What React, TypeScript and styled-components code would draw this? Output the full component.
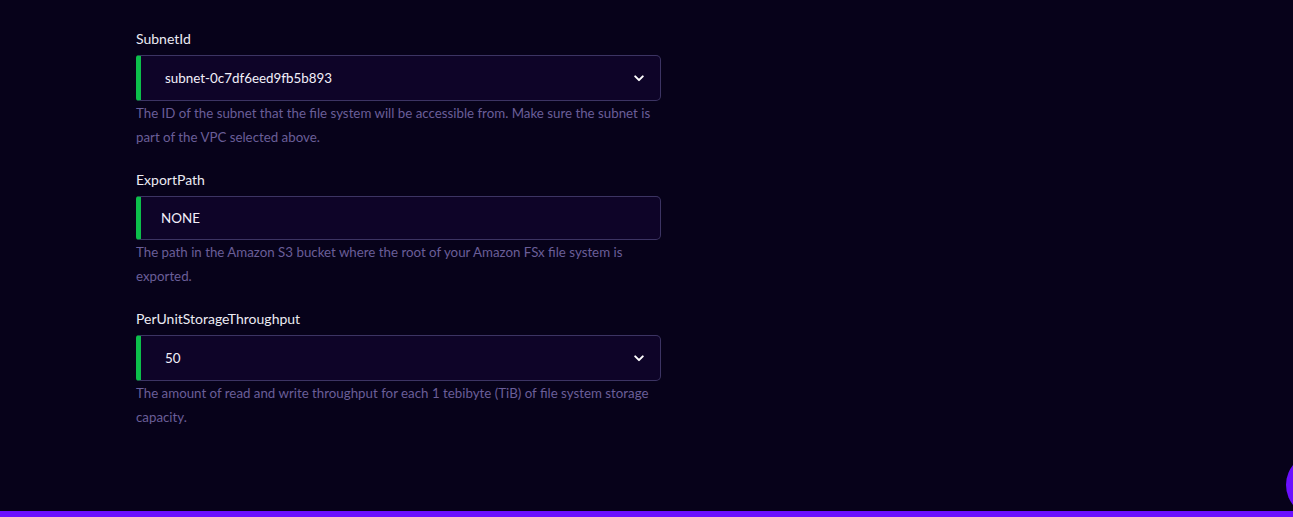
import React from "react";
import styled, { createGlobalStyle } from "styled-components";

const GlobalStyle = createGlobalStyle`
  html, body {
    margin: 0;
    padding: 0;
    background: #07021a;
    height: 100%;
  }
  body {
    font-family: Lato, "Open Sans", sans-serif;
    overflow: hidden;
  }
`;

const fields = [
  {
    label: "SubnetId",
    value: "subnet-0c7df6eed9fb5b893",
    select: true,
    help: "The ID of the subnet that the file system will be accessible from. Make sure the subnet is part of the VPC selected above.",
  },
  {
    label: "ExportPath",
    value: "NONE",
    select: false,
    help: "The path in the Amazon S3 bucket where the root of your Amazon FSx file system is exported.",
  },
  {
    label: "PerUnitStorageThroughput",
    value: "50",
    select: true,
    help: "The amount of read and write throughput for each 1 tebibyte (TiB) of file system storage capacity.",
  },
];

export default function App() {
  return (
    <Page>
      <GlobalStyle />
      <Form>
        {fields.map((f) => (
          <Field key={f.label}>
            <Label>{f.label}</Label>
            <Box $select={f.select}>
              <Value $select={f.select}>{f.value}</Value>
              {f.select && (
                <Chevron viewBox="0 0 12 8" width="10" height="7">
                  <path d="M1.5 1.5 L6 6 L10.5 1.5" fill="none" stroke="#fff" strokeWidth="2.4" strokeLinecap="round" strokeLinejoin="round" />
                </Chevron>
              )}
            </Box>
            <Help>{f.help}</Help>
          </Field>
        ))}
      </Form>
      <Bubble />
      <BottomBar />
    </Page>
  );
}

const Page = styled.div`
  position: relative;
  height: 517px;
  background: #07021a;
  overflow: hidden;
`;

const Form = styled.div`
  width: 525px;
  padding: 29px 0 0 136px;
  display: flex;
  flex-direction: column;
  gap: 21px;
`;

const Field = styled.div`
  display: flex;
  flex-direction: column;
`;

const Label = styled.div`
  color: #ecebf3;
  font-size: 14px;
  line-height: 20px;
  margin-bottom: 6px;
`;

const Box = styled.div<{ $select: boolean }>`
  box-sizing: border-box;
  height: ${(p) => (p.$select ? "46px" : "44px")};
  display: flex;
  align-items: center;
  background: #0e0428;
  border: 1px solid #3c3463;
  border-left: 5px solid #0cbf4b;
  border-radius: 3px 5px 5px 3px;
  padding-right: 16px;
`;

const Value = styled.div<{ $select: boolean }>`
  flex: 1;
  color: #f2f0fa;
  font-size: 13.4px;
  padding-left: ${(p) => (p.$select ? "24px" : "20px")};
`;

const Chevron = styled.svg`
  display: block;
`;

const Help = styled.div`
  color: #6a5e98;
  font-size: 13.3px;
  line-height: 24px;
`;

const Bubble = styled.div`
  position: absolute;
  right: -57px;
  top: 453px;
  width: 64px;
  height: 64px;
  border-radius: 50%;
  background: #6b0fff;
`;

const BottomBar = styled.div`
  position: absolute;
  left: 0;
  right: 0;
  bottom: 0;
  height: 6px;
  background: #6b0fff;
`;
